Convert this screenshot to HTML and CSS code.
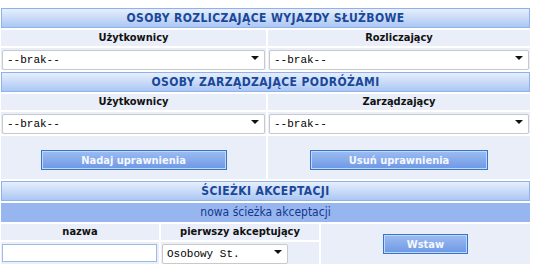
FILE: index.html
```html
<!DOCTYPE html>
<html lang="pl">
<head>
    <meta charset="UTF-8">
    <title>Uprawnienia</title>
    <link rel="stylesheet" href="styles.css">
</head>
<body>

<div class="panel">
    <div class="section-head">OSOBY ROZLICZAJĄCE WYJAZDY SŁUŻBOWE</div>
    <div class="pair">
        <div class="label">Użytkownicy</div>
        <div class="label">Rozliczający</div>
        <div class="field"><span class="dropdown"><select><option>--brak--</option></select></span></div>
        <div class="field"><span class="dropdown"><select><option>--brak--</option></select></span></div>
    </div>

    <div class="section-head">OSOBY ZARZĄDZAJĄCE PODRÓŻAMI</div>
    <div class="pair">
        <div class="label">Użytkownicy</div>
        <div class="label">Zarządzający</div>
        <div class="field"><span class="dropdown"><select><option>--brak--</option></select></span></div>
        <div class="field"><span class="dropdown"><select><option>--brak--</option></select></span></div>
        <div class="actions"><button class="btn btn-grant">Nadaj uprawnienia</button></div>
        <div class="actions"><button class="btn btn-revoke">Usuń uprawnienia</button></div>
    </div>

    <div class="section-head">ŚCIEŻKI AKCEPTACJI</div>
    <div class="sub-head">nowa ścieżka akceptacji</div>
    <div class="path-form">
        <div class="label">nazwa</div>
        <div class="label">pierwszy akceptujący</div>
        <div class="insert-cell"><button class="btn btn-insert">Wstaw</button></div>
        <div class="field"><input type="text" class="name-input"></div>
        <div class="field"><span class="dropdown dropdown-small"><select><option>Osobowy St.</option></select></span></div>
    </div>
</div>

</body>
</html>
```

FILE: styles.css
```css
body {
    margin: 8px 0 0 1px;
    font-family: "DejaVu Sans Condensed", "DejaVu Sans", sans-serif;
    font-stretch: condensed;
    background-color: #fff;
}

.panel {
    width: 529px;
    display: grid;
    gap: 2px;
}

.section-head {
    height: 18px;
    line-height: 18px;
    border: 1px solid #8fb2ea;
    background: linear-gradient(#e6effc, #abc7f4);
    color: #1b4899;
    font-size: 12px;
    font-weight: bold;
    letter-spacing: 0.4px;
    text-align: center;
}

.sub-head {
    height: 19px;
    line-height: 19px;
    background-color: #97b6ef;
    color: #15378a;
    font-size: 12px;
    text-align: center;
}

.pair {
    display: grid;
    grid-template-columns: 265px 262px;
    gap: 2px;
}

.path-form {
    display: grid;
    grid-template-columns: 158px 158px 209px;
    gap: 2px;
}

.label {
    height: 16px;
    line-height: 16px;
    background-color: #e9eef9;
    color: #111;
    font-size: 11px;
    font-weight: bold;
    text-align: center;
}

.field {
    height: 22px;
    background-color: #e9eef9;
    display: flex;
    align-items: center;
}

.dropdown {
    position: relative;
    display: block;
    width: calc(100% - 2px);
    margin-left: 1px;
}

.dropdown select {
    appearance: none;
    -webkit-appearance: none;
    width: 100%;
    height: 20px;
    margin: 0;
    padding: 0 0 0 4px;
    border: 1px solid #c9c9c9;
    border-radius: 2px;
    background-color: #fff;
    font-family: "Liberation Mono", monospace;
    font-size: 11px;
    color: #000;
    outline: none;
}

.dropdown::after {
    content: "";
    position: absolute;
    right: 6px;
    top: 8px;
    border-left: 4px solid transparent;
    border-right: 4px solid transparent;
    border-top: 4px solid #111;
    pointer-events: none;
}

.dropdown-small {
    width: 126px;
}

.actions {
    height: 43px;
    background-color: #e9eef9;
    display: flex;
    justify-content: center;
    align-items: flex-start;
    padding-top: 14px;
    box-sizing: border-box;
}

.btn {
    height: 20px;
    padding: 0;
    border: 1px solid #3276cf;
    box-shadow: inset 0 0 0 1px #c3d6f7;
    background: linear-gradient(#9dbcf1, #6e98e5);
    color: #f4f7fe;
    font-family: "DejaVu Sans Condensed", "DejaVu Sans", sans-serif;
    font-stretch: condensed;
    font-size: 11px;
    font-weight: bold;
    cursor: pointer;
}

.btn-grant {
    width: 186px;
}

.btn-revoke {
    width: 178px;
}

.btn-insert {
    width: 85px;
}

.insert-cell {
    grid-row: span 2;
    background-color: #e9eef9;
    display: flex;
    justify-content: center;
    align-items: center;
}

.name-input {
    width: 155px;
    height: 18px;
    margin: 0 0 0 1px;
    padding: 0 3px;
    box-sizing: border-box;
    border: 1px solid #9cbbea;
    background-color: #fff;
    outline: none;
}
```
